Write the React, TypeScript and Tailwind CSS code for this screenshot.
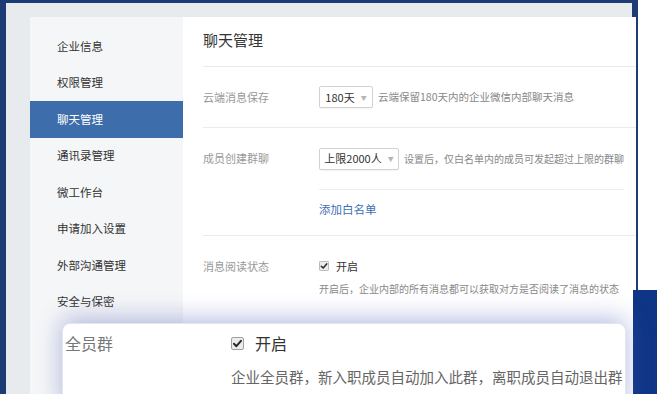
const menu = ['企业信息', '权限管理', '聊天管理', '通讯录管理', '微工作台', '申请加入设置', '外部沟通管理', '安全与保密'];

const Check = ({ size }: { size: number }) => (
    <svg width={size} height={size} viewBox="0 0 13 13" className="shrink-0">
        <rect x="0.5" y="0.5" width="12" height="12" rx="1.5" fill="#ececec" stroke="#a0a0a0" />
        <path d="M3 6.8 L5.4 9.2 L10 3.8" fill="none" stroke="#2b2b2b" strokeWidth="2" strokeLinecap="round" strokeLinejoin="round" />
    </svg>
);

const Select = ({ label, width }: { label: string; width: string }) => (
    <div className={`${width} h-[22px] shrink-0 flex items-center justify-center gap-[6px] border border-[#d2d2d2] rounded-[2px] bg-white shadow-[0_1px_1px_rgba(0,0,0,0.05)]`}>
        <span className="text-[11px] text-[#333]">{label}</span>
        <span className="text-[6px] text-[#b5b5b5]">▼</span>
    </div>
);

const Sidebar = () => (
    <div className="w-[153px] shrink-0 bg-[#f5f6f7] pt-[11px]">
        {menu.map((item) => (
            <div
                key={item}
                className={
                    item === '聊天管理'
                        ? 'h-[36.5px] flex items-center pl-[27px] text-[11.5px] text-white bg-[#3e6dab]'
                        : 'h-[36.5px] flex items-center pl-[27px] text-[11.5px] text-[#333]'
                }
            >
                {item}
            </div>
        ))}
    </div>
);

const Content = () => (
    <div className="flex-1 bg-white pl-[20px]">
        <div className="h-[50px] flex items-center pb-[2px] border-b border-[#ebebeb] text-[15px] text-[#333]">聊天管理</div>
        <div className="flex h-[61px] items-center border-b border-[#ebebeb]">
            <div className="w-[116px] shrink-0 text-[11px] text-[#999]">云端消息保存</div>
            <Select label="180天" width="w-[54px]" />
            <span className="ml-[5px] text-[10.5px] text-[#888] whitespace-nowrap">云端保留180天内的企业微信内部聊天消息</span>
        </div>
        <div className="flex border-b border-[#ebebeb]">
            <div className="w-[116px] h-[61px] shrink-0 flex items-center text-[11px] text-[#999]">成员创建群聊</div>
            <div className="flex-1">
                <div className="h-[62px] flex items-center border-b border-[#eeeeee] mr-[12px]">
                    <Select label="上限2000人" width="w-[80px]" />
                    <span className="ml-[5px] text-[10px] text-[#888] whitespace-nowrap">设置后，仅白名单内的成员可发起超过上限的群聊</span>
                </div>
                <div className="h-[45px] flex items-center pb-[5px] text-[11.5px] text-[#3e6fb3]">添加白名单</div>
            </div>
        </div>
        <div className="flex pt-[22px] h-[120px]">
            <div className="w-[116px] shrink-0 text-[11px] leading-[16px] text-[#999]">消息阅读状态</div>
            <div className="flex flex-col">
                <div className="flex items-center gap-[7px] h-[16px]">
                    <Check size={10} />
                    <span className="text-[11px] text-[#333]">开启</span>
                </div>
                <div className="mt-[7px] text-[10px] text-[#888] whitespace-nowrap">开启后，企业内部的所有消息都可以获取对方是否阅读了消息的状态</div>
            </div>
        </div>
    </div>
);

export default function App() {
    return (
        <div
            className="relative w-[657px] h-[394px] overflow-hidden bg-white"
            style={{ fontFamily: '"Noto Sans CJK SC", "Noto Sans", sans-serif' }}
        >
            <div className="w-[638px] h-full bg-[#1d3b74] pl-[6px] pr-[6px] pt-[3px]">
                <div className="h-full bg-[#e8ebee] pl-[24px] pt-[14px]">
                    <div className="flex h-full">
                        <Sidebar />
                        <Content />
                    </div>
                </div>
            </div>

            <div className="absolute left-[633px] top-[290px] w-[24px] h-[104px] bg-[#0f3586]" />

            <div className="absolute left-[62px] top-[323px] w-[564px] h-[90px] bg-white rounded-[8px] border border-[#e4e6ee] shadow-[0_-4px_24px_rgba(90,105,190,0.45)] flex">
                <div className="w-[168px] pl-[2px] pt-[7px] text-[16px] text-[#777]">全员群</div>
                <div className="flex flex-col">
                    <div className="flex items-center gap-[11px] pt-[7px] h-[31px]">
                        <Check size={13} />
                        <span className="text-[16px] text-[#333]">开启</span>
                    </div>
                    <div className="mt-[11px] text-[14.5px] text-[#666] whitespace-nowrap">企业全员群，新入职成员自动加入此群，离职成员自动退出群</div>
                </div>
            </div>
        </div>
    );
}
